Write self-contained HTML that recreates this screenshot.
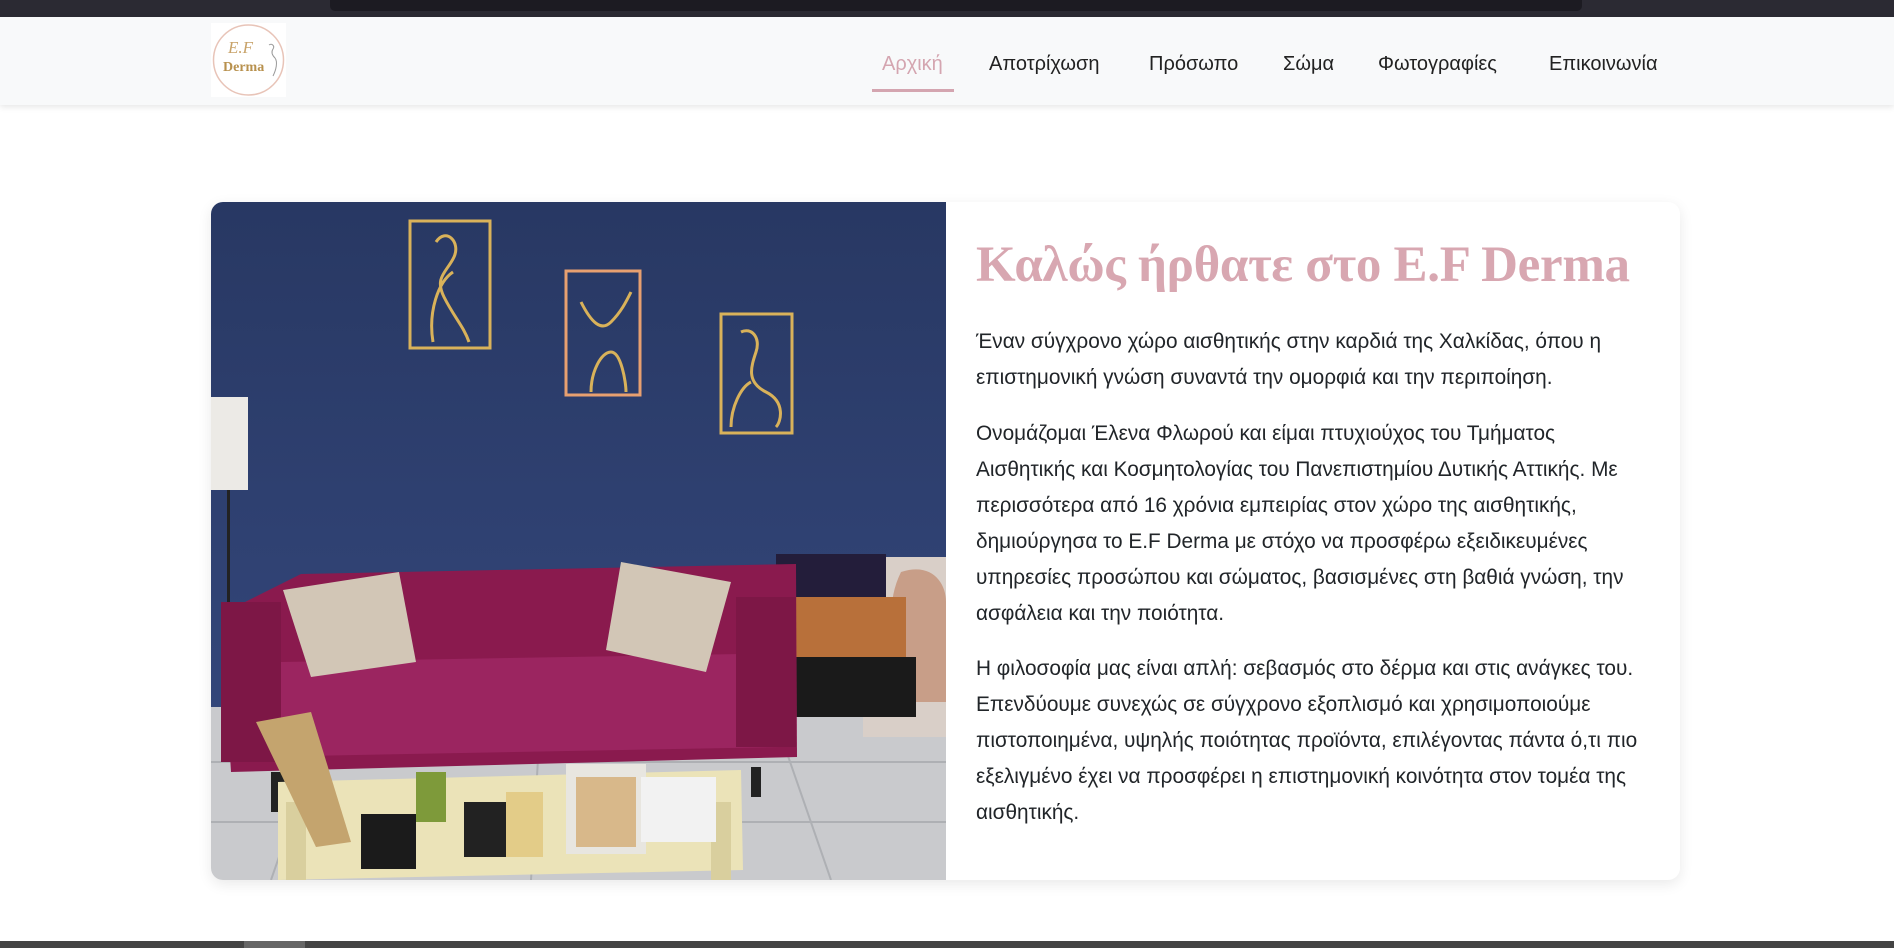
<!DOCTYPE html>
<html><head><meta charset="utf-8"><style>
*{margin:0;padding:0;box-sizing:border-box}
body{width:1894px;height:948px;overflow:hidden;background:#fff;font-family:"Liberation Sans","DejaVu Sans",sans-serif;position:relative}
.top{position:absolute;left:0;top:0;width:1894px;height:17px;background:#2b2a33}
.top .u{position:absolute;left:330px;top:0;width:1252px;height:11px;background:#1c1b22;border-radius:0 0 5px 5px}
.nav{position:absolute;left:0;top:17px;width:1894px;height:88px;background:#f8f9fa;box-shadow:0 2px 6px rgba(0,0,0,.1)}
.logo{position:absolute;left:211px;top:6px;width:75px;height:74px;background:#fff}
.nav a{position:absolute;top:36px;font-size:20px;color:#222;text-decoration:none;white-space:nowrap}
.nav a.act{color:#d4a5b0}
.ul{position:absolute;left:872px;top:72px;width:82px;height:3px;background:#d4a5b0}
.card{position:absolute;left:211px;top:202px;width:1469px;height:678px;border-radius:12px;background:#fff;box-shadow:0 4px 14px rgba(0,0,0,.09);overflow:hidden}
.img{position:absolute;left:0;top:0;width:735px;height:678px}
h1{position:absolute;left:765px;top:34px;font-family:"Liberation Serif",serif;font-weight:bold;font-size:51px;line-height:58px;color:#d8a7b1;white-space:nowrap;letter-spacing:-0.3px}
.p{position:absolute;left:765px;font-size:20.8px;line-height:36px;color:#212529;white-space:nowrap}
.bot{position:absolute;left:0;top:941px;width:1894px;height:7px;background:#444}
.bot i{position:absolute;left:244px;top:0;width:61px;height:7px;background:#666}
</style></head><body>
<div class="top"><div class="u"></div></div>
<div class="nav">
<div class="logo"><svg width="75" height="74" viewBox="0 0 75 74"><circle cx="37.5" cy="37" r="35" fill="#fff" stroke="#e8c4b8" stroke-width="1.5"/><text x="17" y="30" font-family="Liberation Serif" font-style="italic" font-size="17" fill="#c8a36a">E.F</text><text x="12" y="48" font-family="Liberation Serif" font-weight="bold" font-size="14" fill="#b8914e">Derma</text><path d="M58 22c3-2 6 1 4 4-2 3-1 6 2 9 3 4 1 12-2 18" fill="none" stroke="#999" stroke-width="1"/></svg></div>
<a class="act" style="left:882px">Αρχική</a>
<a style="left:989px">Αποτρίχωση</a>
<a style="left:1149px">Πρόσωπο</a>
<a style="left:1283px">Σώμα</a>
<a style="left:1378px">Φωτογραφίες</a>
<a style="left:1549px">Επικοινωνία</a>
<div class="ul"></div>
</div>
<div class="card">
<svg class="img" viewBox="0 0 735 678" preserveAspectRatio="none">
<defs><linearGradient id="w" x1="0" y1="0" x2="0" y2="1"><stop offset="0" stop-color="#283863"/><stop offset="1" stop-color="#33467a"/></linearGradient></defs>
<rect width="735" height="520" fill="url(#w)"/>
<rect y="505" width="735" height="173" fill="#c9cacd"/>
<g stroke="#aeb0b4" stroke-width="2" fill="none"><path d="M0 560L735 560M0 620L735 620M120 505L60 678M330 505L320 678M560 505L620 678"/></g>
<rect x="0" y="195" width="37" height="93" fill="#eceae6"/>
<rect x="16" y="288" width="3" height="250" fill="#222"/>
<g fill="none" stroke="#d9b25a" stroke-width="3"><rect x="199" y="19" width="80" height="127"/><rect x="355" y="69" width="74" height="124" stroke="#e8a070"/><rect x="510" y="112" width="71" height="119"/>
<path d="M225 40c10-15 25 0 18 15s-20 20-10 40 20 30 25 45M222 140c-5-30 5-60 20-70"/><path d="M370 100c10 20 20 30 30 20s15-20 20-30M380 190c0-20 10-40 20-40s15 30 15 40"/><path d="M530 130c10-5 20 5 15 20s-10 30 10 40 15 30 10 35M520 225c0-20 10-40 20-45"/></g>
<rect x="652" y="355" width="83" height="180" fill="#d9cfc8"/><path d="M690 370c30-10 45 10 45 30v100h-40c-10-40-25-90-5-130z" fill="#c89e88"/>
<rect x="565" y="352" width="110" height="65" fill="#231d3a"/><rect x="585" y="395" width="110" height="60" fill="#b8703a"/>
<rect x="585" y="455" width="120" height="60" fill="#1a1a1a"/>
<path d="M10 412L90 372L585 362L586 555L20 570Z" fill="#8a1a4e"/>
<path d="M70 460L530 452L575 470L570 545L40 555Z" fill="#9b2560"/>
<rect x="10" y="400" width="60" height="160" fill="#7d1746"/><rect x="525" y="395" width="60" height="150" fill="#7d1746"/>
<rect x="60" y="570" width="14" height="40" fill="#222"/><rect x="540" y="565" width="10" height="30" fill="#222"/>
<path d="M72 388L188 370L205 460L100 475Z" fill="#d2c6b6"/><path d="M410 360L520 380L495 470L395 448Z" fill="#d2c6b6"/>
<path d="M67 580L530 568L532 668L67 678Z" fill="#ebe3b8"/><rect x="75" y="600" width="20" height="78" fill="#d9cf9e"/><rect x="500" y="600" width="20" height="78" fill="#d9cf9e"/>
<path d="M45 520L100 510L140 640L105 645Z" fill="#c4a46e"/>
<rect x="150" y="612" width="55" height="55" fill="#1b1b1b"/><rect x="205" y="570" width="30" height="50" fill="#7e9a3a"/>
<rect x="253" y="600" width="45" height="55" fill="#222"/><rect x="295" y="590" width="37" height="65" fill="#e3cc88"/>
<rect x="355" y="562" width="80" height="90" fill="#e8e6e0"/><rect x="365" y="575" width="60" height="70" fill="#d8b88a"/>
<rect x="430" y="575" width="75" height="65" fill="#f2f2f2"/>
</svg>
<h1>Καλώς ήρθατε στο E.F Derma</h1>
<div class="p" style="top:122px">Έναν σύγχρονο χώρο αισθητικής στην καρδιά της Χαλκίδας, όπου η<br>επιστημονική γνώση συναντά την ομορφιά και την περιποίηση.</div>
<div class="p" style="top:214px">Ονομάζομαι Έλενα Φλωρού και είμαι πτυχιούχος του Τμήματος<br>Αισθητικής και Κοσμητολογίας του Πανεπιστημίου Δυτικής Αττικής. Με<br>περισσότερα από 16 χρόνια εμπειρίας στον χώρο της αισθητικής,<br>δημιούργησα το E.F Derma με στόχο να προσφέρω εξειδικευμένες<br>υπηρεσίες προσώπου και σώματος, βασισμένες στη βαθιά γνώση, την<br>ασφάλεια και την ποιότητα.</div>
<div class="p" style="top:449px">Η φιλοσοφία μας είναι απλή: σεβασμός στο δέρμα και στις ανάγκες του.<br>Επενδύουμε συνεχώς σε σύγχρονο εξοπλισμό και χρησιμοποιούμε<br>πιστοποιημένα, υψηλής ποιότητας προϊόντα, επιλέγοντας πάντα ό,τι πιο<br>εξελιγμένο έχει να προσφέρει η επιστημονική κοινότητα στον τομέα της<br>αισθητικής.</div>
</div>
<div class="bot"><i></i></div>
</body></html>
